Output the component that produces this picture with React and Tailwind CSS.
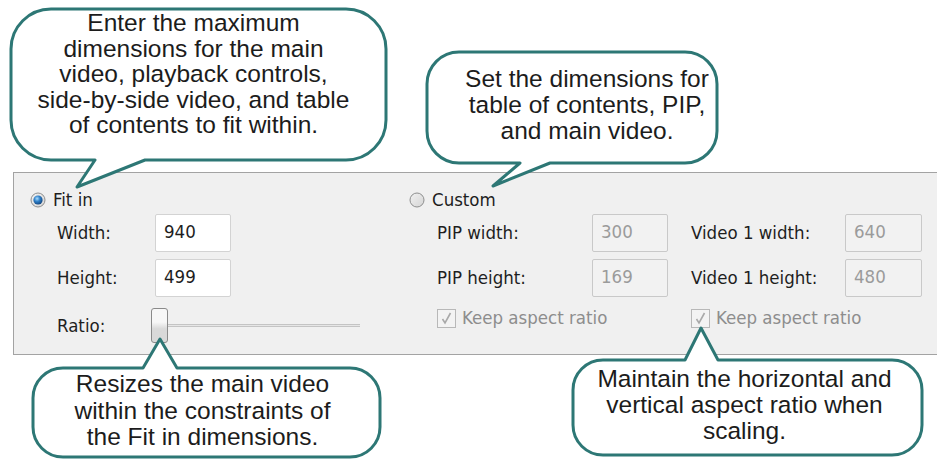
import React from "react";

const STROKE = "#2d7775";

function Callout({ pos, w, h, r, tail, textClass, children }) {
  const { side, a, b, tx, ty } = tail;
  const d =
    side === "bottom"
      ? `M${r},0 H${w - r} A${r},${r} 0 0 1 ${w},${r} V${h - r} A${r},${r} 0 0 1 ${w - r},${h} H${b} L${tx},${ty} L${a},${h} H${r} A${r},${r} 0 0 1 0,${h - r} V${r} A${r},${r} 0 0 1 ${r},0 Z`
      : `M${r},0 H${a} L${tx},${ty} L${b},0 H${w - r} A${r},${r} 0 0 1 ${w},${r} V${h - r} A${r},${r} 0 0 1 ${w - r},${h} H${r} A${r},${r} 0 0 1 0,${h - r} V${r} A${r},${r} 0 0 1 ${r},0 Z`;
  return (
    <div className={`absolute z-10 ${pos}`}>
      <svg className="absolute left-0 top-0 overflow-visible" width={w} height={h}>
        <path d={d} fill="#ffffff" stroke={STROKE} strokeWidth="3" strokeLinejoin="round" />
      </svg>
      <div
        className={`relative flex h-full flex-col items-center text-center text-[24.5px] text-[#1c1c1c] font-['Liberation_Sans',Arial,sans-serif] ${textClass}`}
      >
        {children}
      </div>
    </div>
  );
}

function Radio({ checked }) {
  return (
    <svg width="16" height="16" viewBox="0 0 16 16">
      <defs>
        <linearGradient id={checked ? "rg1" : "rg0"} x1="0" y1="0" x2="1" y2="1">
          <stop offset="0" stopColor="#f2f2f2" />
          <stop offset="1" stopColor="#d4d4d4" />
        </linearGradient>
        <radialGradient id="dot" cx="0.4" cy="0.35" r="0.7">
          <stop offset="0" stopColor="#a8dcff" />
          <stop offset="0.45" stopColor="#2f80c8" />
          <stop offset="1" stopColor="#0f3f78" />
        </radialGradient>
      </defs>
      <circle cx="8" cy="8" r="7" fill={`url(#${checked ? "rg1" : "rg0"})`} stroke="#8e8f8f" strokeWidth="1" />
      {checked && <circle cx="8" cy="8" r="4.6" fill="url(#dot)" />}
    </svg>
  );
}

function Field({ value, disabled }) {
  return (
    <div
      className={`h-[38px] rounded-[2px] border px-[8px] pt-[6px] leading-[22px] ${
        disabled
          ? "border-[#c9c9c9] bg-[#f2f2f2] text-[#9b9b9b]"
          : "border-[#d3d3d3] bg-white text-[#1e1e1e]"
      }`}
    >
      {value}
    </div>
  );
}

function DisabledCheck({ label }) {
  return (
    <div className="flex items-center gap-[6px] text-[#8d8d8d]">
      <svg width="19" height="19" viewBox="0 0 19 19">
        <rect x="0.5" y="0.5" width="18" height="18" fill="#f3f3f3" stroke="#b8b8b8" />
        <path d="M5.5 10 L8 14 L13.5 4" fill="none" stroke="#a9a9a9" strokeWidth="1.6" />
      </svg>
      <span>{label}</span>
    </div>
  );
}

export default function App() {
  return (
    <div className="relative h-[459px] w-[937px] overflow-hidden bg-white">
      {/* Options panel */}
      <div className="ml-[13px] mt-[172px] flex h-[183px] w-[924px] border border-r-0 border-[#a3a3a3] bg-[#f0f0f0] text-[18.5px] text-[#1e1e1e] font-['DejaVu_Sans_Condensed','Liberation_Sans',sans-serif]">
        {/* Fit in */}
        <div className="w-[395px] pl-[16px] pt-[17px]">
          <div className="flex h-[20px] items-center gap-[7px]">
            <Radio checked />
            <span>Fit in</span>
          </div>
          <div className="mt-[4px] pl-[27px]">
            <div className="flex h-[38px] items-center">
              <span className="w-[98px]">Width:</span>
              <div className="w-[76px]">
                <Field value="940" />
              </div>
            </div>
            <div className="mt-[7px] flex h-[38px] items-center">
              <span className="w-[98px]">Height:</span>
              <div className="w-[76px]">
                <Field value="499" />
              </div>
            </div>
            <div className="mt-[11px] flex h-[35px] items-center">
              <span className="w-[94px]">Ratio:</span>
              <div className="flex w-[209px] items-center">
                <div className="h-[35px] w-[17px] rounded-[3px] border border-[#8a8a8a] bg-gradient-to-b from-[#f7f7f7] from-40% to-[#d9d9d9] to-60%" />
                <div className="h-[3px] flex-1 border-y border-[#c4c4c4] bg-[#e6e6e6]" />
              </div>
            </div>
          </div>
        </div>

        {/* Custom */}
        <div className="flex-1 pt-[17px]">
          <div className="flex h-[20px] items-center gap-[7px]">
            <Radio />
            <span>Custom</span>
          </div>
          <div className="mt-[4px] pl-[28px]">
            <div className="flex h-[38px] items-center">
              <span className="w-[155px]">PIP width:</span>
              <div className="w-[76px]">
                <Field value="300" disabled />
              </div>
              <span className="ml-[23px] w-[154px]">Video 1 width:</span>
              <div className="w-[77px]">
                <Field value="640" disabled />
              </div>
            </div>
            <div className="mt-[7px] flex h-[38px] items-center">
              <span className="w-[155px]">PIP height:</span>
              <div className="w-[76px]">
                <Field value="169" disabled />
              </div>
              <span className="ml-[23px] w-[154px]">Video 1 height:</span>
              <div className="w-[77px]">
                <Field value="480" disabled />
              </div>
            </div>
            <div className="mt-[11px] flex h-[20px] items-center">
              <div className="w-[254px]">
                <DisabledCheck label="Keep aspect ratio" />
              </div>
              <DisabledCheck label="Keep aspect ratio" />
            </div>
          </div>
        </div>
      </div>

      {/* Callouts */}
      <Callout
        pos="left-[11px] top-[9px] w-[375px] h-[151px]"
        w={375}
        h={151}
        r={40}
        tail={{ side: "bottom", a: 84, b: 134, tx: 66, ty: 178 }}
        textClass="pt-[1px] leading-[25.5px] -translate-x-[5px]"
      >
        <span>Enter the maximum</span>
        <span>dimensions for the main</span>
        <span>video, playback controls,</span>
        <span>side-by-side video, and table</span>
        <span>of contents to fit within.</span>
      </Callout>

      <Callout
        pos="left-[427px] top-[52px] w-[290px] h-[111px]"
        w={290}
        h={111}
        r={32}
        tail={{ side: "bottom", a: 93, b: 123, tx: 66, ty: 134 }}
        textClass="pt-[14px] pl-[30px] leading-[26px]"
      >
        <span>Set the dimensions for</span>
        <span>table of contents, PIP,</span>
        <span>and main video.</span>
      </Callout>

      <Callout
        pos="left-[33px] top-[368px] w-[347px] h-[89px]"
        w={347}
        h={89}
        r={30}
        tail={{ side: "top", a: 110, b: 144, tx: 127, ty: -29 }}
        textClass="pt-[3px] leading-[26.5px] -translate-x-[4px]"
      >
        <span>Resizes the main video</span>
        <span>within the constraints of</span>
        <span>the Fit in dimensions.</span>
      </Callout>

      <Callout
        pos="left-[573px] top-[360px] w-[349px] h-[95px]"
        w={349}
        h={95}
        r={30}
        tail={{ side: "top", a: 112, b: 145, tx: 128, ty: -32 }}
        textClass="pt-[6px] leading-[26px] -translate-x-[3px]"
      >
        <span>Maintain the horizontal and</span>
        <span>vertical aspect ratio when</span>
        <span>scaling.</span>
      </Callout>
    </div>
  );
}
